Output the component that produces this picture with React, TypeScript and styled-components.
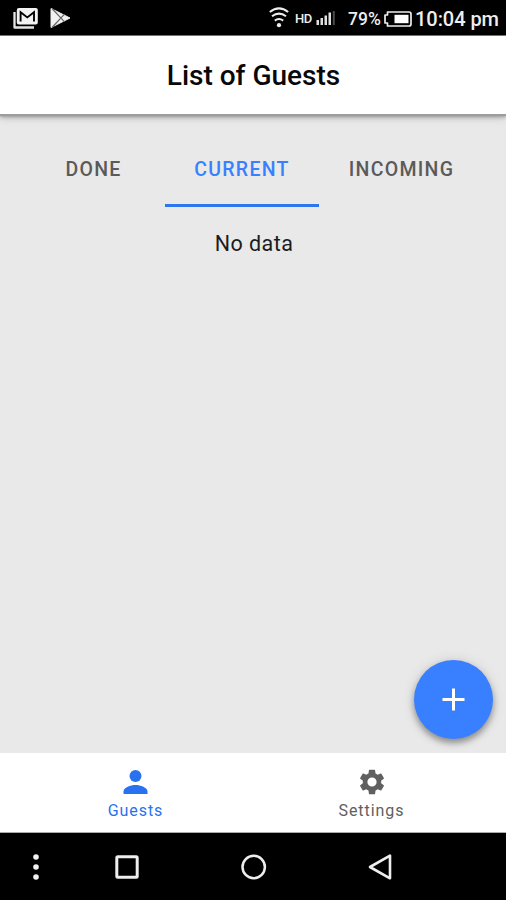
import React from 'react';
import styled, { createGlobalStyle } from 'styled-components';

const Global = createGlobalStyle`
  *, *::before, *::after { box-sizing: border-box; }
  body { margin: 0; background: #000; font-family: Roboto, "Liberation Sans", sans-serif; }
  svg { display: block; flex: none; }
`;

const Screen = styled.div`
  display: flex;
  flex-direction: column;
  width: 506px;
  height: 900px;
  overflow: hidden;
  background: #e9e9e9;
`;

const StatusBar = styled.div`
  display: flex;
  align-items: center;
  flex: none;
  height: 36px;
  padding: 0 8px 0 13px;
  background: #000;
  border-bottom: 1px solid #777;
  color: #eee;
`;

const Spacer = styled.div`
  flex: 1;
`;

const StatusText = styled.span<{ $size: number; $width: number; $gap?: number; $spacing?: number }>`
  width: ${p => p.$width}px;
  margin-left: ${p => p.$gap ?? 0}px;
  padding-top: 3px;
  font-size: ${p => p.$size}px;
  font-weight: 500;
  letter-spacing: ${p => p.$spacing ?? 0}px;
  line-height: 24px;
  white-space: nowrap;
`;

const Header = styled.header`
  display: flex;
  align-items: center;
  justify-content: center;
  flex: none;
  height: 78px;
  background: #fff;
  z-index: 1;
  box-shadow: 0 2px 1px #9d9d9d, 0 3px 4px rgba(0, 0, 0, 0.3), 0 4px 9px rgba(0, 0, 0, 0.12);
`;

const Title = styled.h1`
  margin: 1px 0 0 1px;
  color: #080808;
  font-size: 28px;
  font-weight: 500;
  line-height: 34px;
  letter-spacing: 0;
`;

const Content = styled.main`
  position: relative;
  flex: 1;
  padding-top: 19px;
`;

const Tabs = styled.div`
  display: grid;
  grid-template-columns: 143px 154px 165px;
  justify-content: center;
  height: 74px;
`;

const Tab = styled.button<{ $active?: boolean }>`
  padding: 3px 0 0;
  border: 0;
  border-bottom: 3px solid ${p => (p.$active ? '#2e76ef' : 'transparent')};
  background: none;
  color: ${p => (p.$active ? '#3880ff' : '#5a5a5a')};
  font: 500 19.5px/68px Roboto, sans-serif;
  letter-spacing: 1.3px;
  white-space: nowrap;
`;

const Empty = styled.p`
  margin: 24px 0 0 2px;
  color: #1c1c1c;
  font-size: 21.5px;
  line-height: 26px;
  letter-spacing: 0.45px;
  text-align: center;
`;

const Fab = styled.button`
  position: absolute;
  right: 13px;
  bottom: 14px;
  display: grid;
  place-items: center;
  width: 79px;
  height: 79px;
  padding: 0;
  border: 0;
  border-radius: 50%;
  background: #3880ff;
  box-shadow: 0 4px 6px rgba(0, 0, 0, 0.35), 0 1px 14px rgba(0, 0, 0, 0.12);
`;

const BottomTabs = styled.nav`
  display: grid;
  grid-template-columns: 236px 236px;
  justify-content: center;
  flex: none;
  height: 80px;
  background: #fff;
  border-bottom: 1px solid #aaa;
`;

const BottomTab = styled.a<{ $active?: boolean }>`
  display: flex;
  flex-direction: column;
  align-items: center;
  padding: 13px 0 0 1px;
  color: ${p => (p.$active ? '#2872f0' : '#606060')};
`;

const BottomLabel = styled.span`
  margin-top: 2px;
  font-size: 16px;
  line-height: 22px;
  letter-spacing: 0.95px;
`;

const SystemNav = styled.div`
  display: flex;
  align-items: center;
  flex: none;
  height: 67px;
  padding-left: 30px;
  background: #000;
`;

const NavItem = styled.div<{ $gap?: number }>`
  margin-left: ${p => p.$gap ?? 0}px;
`;

const MailIcon = () => (
  <svg width="27" height="22" viewBox="0 0 27 22">
    <path d="M1.5 5v15.5H21" fill="none" stroke="#e5e5e5" strokeWidth="2.3" strokeLinejoin="round" />
    <rect x="3.8" y="1" width="21" height="16.5" rx="2" fill="#f2f2f2" />
    <path d="M7.6 14.5V5.2l6.7 5.2L21 5.2v9.3" fill="none" stroke="#000" strokeWidth="1.9" />
  </svg>
);

const PlayIcon = () => (
  <svg width="21" height="22" viewBox="0 0 21 22">
    <path d="M1 1.5 20 11 1 20.5z" fill="#f2f2f2" stroke="#eee" strokeLinejoin="round" />
    <path d="M2 1.5 14.5 14.8M2 20.5 14.5 7.2" fill="none" stroke="#666" strokeWidth="1.2" />
  </svg>
);

const WifiIcon = () => (
  <svg width="20" height="21" viewBox="0 0 20 21" fill="none" stroke="#eee" strokeWidth="2">
    <path d="M.8 5q9.2-7.2 18.4 0M3 9.3q7-5.4 14 0M5.8 13.6q4.2-3.2 8.4 0" />
    <circle cx="10" cy="18.2" r="2.1" fill="#eee" stroke="none" />
  </svg>
);

const SignalIcon = () => (
  <svg width="20" height="19" viewBox="0 0 20 19" fill="#e0e0e0">
    <path d="M.5 12h2.5v5H.5zM4.5 10H7v7H4.5zM8.5 7.5H11V17H8.5zM12.5 4.5H15V17h-2.5z" />
    <path d="M16.8 3h2v14h-2z" fill="#4a4a4a" />
  </svg>
);

const BatteryIcon = () => (
  <svg width="28" height="18" viewBox="0 -2 28 18">
    <path d="M3.5 1H25q2 0 2 2v10q0 2-2 2H3.5v-3H1V4h2.5z" fill="none" stroke="#eee" strokeWidth="1.7" strokeLinejoin="round" />
    <path d="M10.5 3.8h14v8.4h-14z" fill="#fff" />
  </svg>
);

const PlusIcon = () => (
  <svg width="23" height="23" viewBox="0 0 23 23">
    <path d="M11.5.5v22M.5 11.5h22" stroke="#fff" strokeWidth="3" />
  </svg>
);

const PersonIcon = () => (
  <svg width="32" height="32" viewBox="0.5 0 32 32" fill="currentColor">
    <circle cx="16" cy="10" r="6" />
    <path d="M4 28v-2.5C4 21.5 11 19 16 19s12 2.5 12 6.5V28z" />
  </svg>
);

const GearIcon = () => (
  <svg width="32" height="32" viewBox="-.5 -.5 25 25" fill="currentColor">
    <path d="M19.14 12.94c.04-.3.06-.61.06-.94 0-.32-.02-.64-.07-.94l2.03-1.58a.49.49 0 0 0 .12-.61l-1.92-3.32a.488.488 0 0 0-.59-.22l-2.39.96c-.5-.38-1.03-.7-1.62-.94l-.36-2.54a.484.484 0 0 0-.48-.41h-3.84c-.24 0-.43.17-.47.41l-.36 2.54c-.59.24-1.13.57-1.62.94l-2.39-.96c-.22-.08-.47 0-.59.22L2.74 8.87c-.12.21-.08.47.12.61l2.03 1.58c-.05.3-.09.63-.09.94s.02.64.07.94l-2.03 1.58a.49.49 0 0 0-.12.61l1.92 3.32c.12.22.37.29.59.22l2.39-.96c.5.38 1.03.7 1.62.94l.36 2.54c.05.24.24.41.48.41h3.84c.24 0 .44-.17.47-.41l.36-2.54c.59-.24 1.13-.56 1.62-.94l2.39.96c.22.08.47 0 .59-.22l1.92-3.32c.12-.22.07-.47-.12-.61l-2.01-1.58zM12 15.6A3.6 3.6 0 1 1 12 8.4a3.6 3.6 0 0 1 0 7.2z" />
  </svg>
);

const MoreIcon = () => (
  <svg width="12" height="28" viewBox="0 0 12 28" fill="#f2f2f2">
    <circle cx="6" cy="4" r="2.8" />
    <circle cx="6" cy="14" r="2.8" />
    <circle cx="6" cy="24" r="2.8" />
  </svg>
);

const SquareIcon = () => (
  <svg width="24" height="24" viewBox="0 0 24 24">
    <rect x="1.8" y="1.8" width="20.4" height="20.4" rx="1" fill="none" stroke="#eee" strokeWidth="3" />
  </svg>
);

const CircleIcon = () => (
  <svg width="26" height="26" viewBox="0 0 26 26">
    <circle cx="12.7" cy="13" r="11.2" fill="none" stroke="#eee" strokeWidth="2.5" />
  </svg>
);

const BackIcon = () => (
  <svg width="26" height="28" viewBox="0 0 26 28">
    <path d="M23 2.7v22.6L3 14z" fill="none" stroke="#eee" strokeWidth="2.6" strokeLinejoin="round" />
  </svg>
);

export default function App() {
  return (
    <>
      <Global />
      <Screen>
        <StatusBar>
          <MailIcon />
          <NavItem $gap={10}><PlayIcon /></NavItem>
          <Spacer />
          <WifiIcon />
          <StatusText $size={13} $width={18} $gap={6} $spacing={-0.4}>HD</StatusText>
          <NavItem $gap={3}><SignalIcon /></NavItem>
          <StatusText $size={17.5} $width={33} $gap={12}>79%</StatusText>
          <NavItem $gap={3}><BatteryIcon /></NavItem>
          <StatusText $size={20} $width={83} $gap={3} $spacing={-0.05}>10:04 pm</StatusText>
        </StatusBar>
        <Header>
          <Title>List of Guests</Title>
        </Header>
        <Content>
          <Tabs>
            <Tab>DONE</Tab>
            <Tab $active>CURRENT</Tab>
            <Tab>INCOMING</Tab>
          </Tabs>
          <Empty>No data</Empty>
          <Fab aria-label="Add guest"><PlusIcon /></Fab>
        </Content>
        <BottomTabs>
          <BottomTab $active><PersonIcon /><BottomLabel>Guests</BottomLabel></BottomTab>
          <BottomTab><GearIcon /><BottomLabel>Settings</BottomLabel></BottomTab>
        </BottomTabs>
        <SystemNav>
          <NavItem><MoreIcon /></NavItem>
          <NavItem $gap={73}><SquareIcon /></NavItem>
          <NavItem $gap={102}><CircleIcon /></NavItem>
          <NavItem $gap={100}><BackIcon /></NavItem>
        </SystemNav>
      </Screen>
    </>
  );
}
